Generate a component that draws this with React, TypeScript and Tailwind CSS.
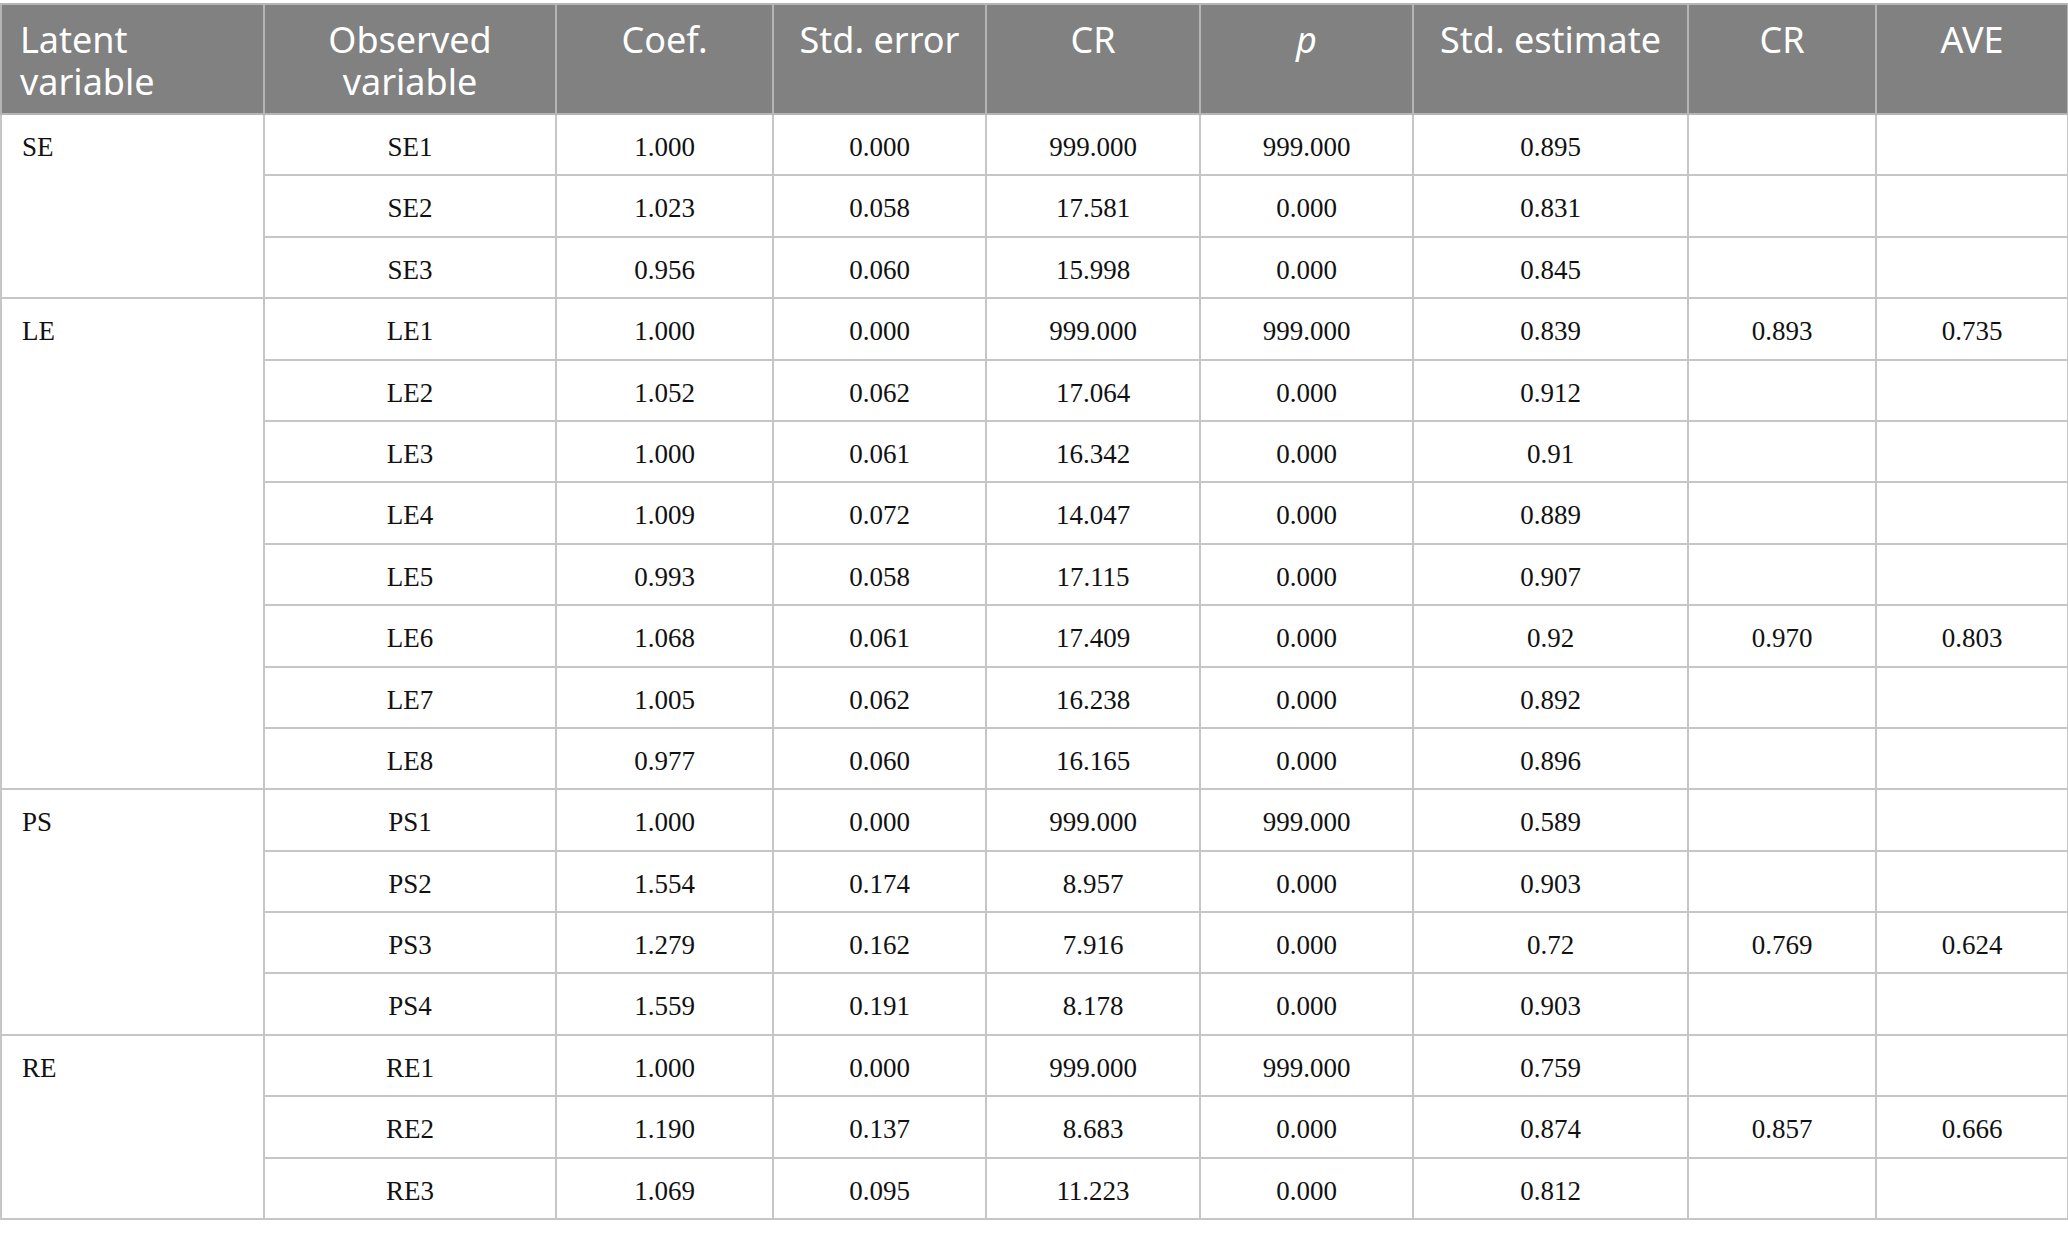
import type { ReactNode } from "react";

type Row = {
  obs: string;
  vals: string[];
  cr?: string;
  ave?: string;
};

type Group = { latent: string; rows: Row[] };

const groups: Group[] = [
  {
    latent: "SE",
    rows: [
      { obs: "SE1", vals: ["1.000", "0.000", "999.000", "999.000", "0.895"] },
      { obs: "SE2", vals: ["1.023", "0.058", "17.581", "0.000", "0.831"] },
      { obs: "SE3", vals: ["0.956", "0.060", "15.998", "0.000", "0.845"] },
    ],
  },
  {
    latent: "LE",
    rows: [
      { obs: "LE1", vals: ["1.000", "0.000", "999.000", "999.000", "0.839"], cr: "0.893", ave: "0.735" },
      { obs: "LE2", vals: ["1.052", "0.062", "17.064", "0.000", "0.912"] },
      { obs: "LE3", vals: ["1.000", "0.061", "16.342", "0.000", "0.91"] },
      { obs: "LE4", vals: ["1.009", "0.072", "14.047", "0.000", "0.889"] },
      { obs: "LE5", vals: ["0.993", "0.058", "17.115", "0.000", "0.907"] },
      { obs: "LE6", vals: ["1.068", "0.061", "17.409", "0.000", "0.92"], cr: "0.970", ave: "0.803" },
      { obs: "LE7", vals: ["1.005", "0.062", "16.238", "0.000", "0.892"] },
      { obs: "LE8", vals: ["0.977", "0.060", "16.165", "0.000", "0.896"] },
    ],
  },
  {
    latent: "PS",
    rows: [
      { obs: "PS1", vals: ["1.000", "0.000", "999.000", "999.000", "0.589"] },
      { obs: "PS2", vals: ["1.554", "0.174", "8.957", "0.000", "0.903"] },
      { obs: "PS3", vals: ["1.279", "0.162", "7.916", "0.000", "0.72"], cr: "0.769", ave: "0.624" },
      { obs: "PS4", vals: ["1.559", "0.191", "8.178", "0.000", "0.903"] },
    ],
  },
  {
    latent: "RE",
    rows: [
      { obs: "RE1", vals: ["1.000", "0.000", "999.000", "999.000", "0.759"] },
      { obs: "RE2", vals: ["1.190", "0.137", "8.683", "0.000", "0.874"], cr: "0.857", ave: "0.666" },
      { obs: "RE3", vals: ["1.069", "0.095", "11.223", "0.000", "0.812"] },
    ],
  },
];

const colWidths = [263, 292, 217, 213, 214, 213, 275, 188, 192];

function Th({ children, left }: { children: ReactNode; left?: boolean }) {
  return (
    <th
      className={`border-2 border-[#b5b5b5] bg-[#808180] px-[18px] pt-[14px] pb-0 align-top text-[36px] leading-[42px] font-normal text-white ${
        left ? "text-left" : "text-center"
      }`}
    >
      {children}
    </th>
  );
}

function Td({ children, left, rowSpan }: { children?: ReactNode; left?: boolean; rowSpan?: number }) {
  return (
    <td
      rowSpan={rowSpan}
      className={`h-[61.4px] border-2 border-[#c6c6c6] pt-[16px] pb-0 align-top text-[27px] leading-[32px] text-[#111] ${
        left ? "pl-[20px] pr-[14px] text-left" : "px-[14px] text-center"
      }`}
    >
      {children}
    </td>
  );
}

export default function App() {
  return (
    <div className="min-h-[1238px] w-[2068px] bg-white pt-[3px]">
      <table
        className="w-[2068px] table-fixed border-collapse border-2 border-[#ababab]"
        style={{ fontFamily: '"Liberation Serif", "Times New Roman", serif' }}
      >
        <colgroup>
          {colWidths.map((w, i) => (
            <col key={i} style={{ width: w }} />
          ))}
        </colgroup>
        <thead style={{ fontFamily: '"Noto Sans", "Open Sans", sans-serif' }}>
          <tr className="h-[110px]">
            <Th left>
              <div>Latent</div>
              <div>variable</div>
            </Th>
            <Th>
              <div>Observed</div>
              <div>variable</div>
            </Th>
            <Th>Coef.</Th>
            <Th>Std. error</Th>
            <Th>CR</Th>
            <Th>
              <span className="italic">p</span>
            </Th>
            <Th>Std. estimate</Th>
            <Th>CR</Th>
            <Th>AVE</Th>
          </tr>
        </thead>
        <tbody>
          {groups.map((g) =>
            g.rows.map((r, i) => (
              <tr key={r.obs}>
                {i === 0 && (
                  <Td left rowSpan={g.rows.length}>
                    {g.latent}
                  </Td>
                )}
                <Td>{r.obs}</Td>
                {r.vals.map((v, j) => (
                  <Td key={j}>{v}</Td>
                ))}
                <Td>{r.cr}</Td>
                <Td>{r.ave}</Td>
              </tr>
            )),
          )}
        </tbody>
      </table>
    </div>
  );
}
